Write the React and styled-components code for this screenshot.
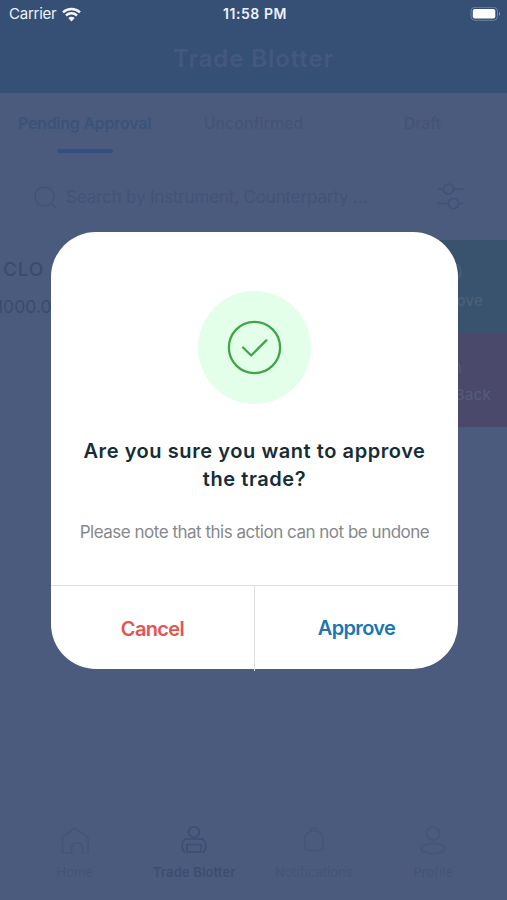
import React from 'react';
import styled, { createGlobalStyle } from 'styled-components';

const GlobalStyle = createGlobalStyle`
    * {
        box-sizing: border-box;
    }
    body {
        margin: 0;
        background: #4b5b7d;
        font-family: Inter, "Liberation Sans", sans-serif;
    }
    button {
        font-family: inherit;
    }
`

const Screen = styled.div`
    position: relative;
    display: flex;
    flex-direction: column;
    width: 507px;
    height: 900px;
    overflow: hidden;
    background: #4b5b7d;
`

const Header = styled.header`
    height: 93px;
    background: #364f75;
`

const StatusBar = styled.div`
    display: grid;
    grid-template-columns: 1fr auto 1fr;
    align-items: center;
    height: 28px;
    padding: 0 6px 0 9px;
    color: #edf2fa;
    font-size: 15px;
    line-height: 28px;
`

const Carrier = styled.div`
    display: flex;
    align-items: center;
    gap: 6px;
    letter-spacing: -0.25px;
`

const Clock = styled.div`
    font-size: 14px;
    font-weight: 600;
    letter-spacing: 0.55px;
`

const Battery = styled.svg`
    justify-self: end;
`

const Title = styled.h1`
    margin: 0;
    height: 60px;
    color: #44587e;
    font-size: 24px;
    font-weight: 600;
    line-height: 61px;
    letter-spacing: 0.9px;
    text-align: center;
`

const Tabs = styled.nav`
    display: grid;
    grid-template-columns: repeat(3, 1fr);
    height: 77px;
    padding-top: 18px;
`

const Tab = styled.div`
    display: flex;
    flex-direction: column;
    align-items: center;
    gap: 14px;
    color: ${props => props.$active ? '#3a5379' : '#435477'};
    font-size: 16px;
    font-weight: ${props => props.$active ? 600 : 500};
    line-height: 24px;
    letter-spacing: ${props => props.$active ? '-0.25px' : '-0.05px'};

    &::after {
        content: '';
        width: 56px;
        height: 4px;
        border-radius: 2px;
        background: ${props => props.$active ? '#36507c' : 'transparent'};
    }
`

const SearchBar = styled.div`
    display: flex;
    align-items: center;
    height: 54px;
    padding: 0 41px 0 33px;
    color: #42537a;
`

const SearchText = styled.span`
    flex: 1;
    margin-left: 8px;
    font-size: 17px;
    letter-spacing: -0.17px;
`

const TradeRow = styled.div`
    display: flex;
    justify-content: space-between;
    height: 187px;
    margin-top: 16px;
`

const TradeInfo = styled.div`
    padding-top: 17px;
    color: #384c71;
`

const TradeName = styled.div`
    padding-left: 3px;
    font-size: 19px;
    font-weight: 500;
    line-height: 26px;
    letter-spacing: 0.8px;
`

const TradeAmount = styled.div`
    margin: 12px 0 0 -4px;
    font-size: 17.5px;
    line-height: 24px;
`

const Actions = styled.div`
    display: flex;
    flex-direction: column;
    width: 110px;
`

const Action = styled.div`
    display: flex;
    flex: 1;
    flex-direction: column;
    align-items: center;
    gap: 9px;
    padding-top: 22px;
    color: ${props => props.$color};
    background: ${props => props.$background};
    font-size: 15px;
    font-weight: 500;
    line-height: 20px;
    letter-spacing: 0.2px;
`

const TabBar = styled.footer`
    display: grid;
    grid-template-columns: repeat(4, 119.5px);
    margin: auto 0 0 15px;
    height: 75px;
`

const TabBarItem = styled.div`
    display: flex;
    flex-direction: column;
    align-items: center;
    gap: 5px;
    color: ${props => props.$active ? '#3a4e74' : '#44557a'};
    font-size: 13px;
    font-weight: ${props => props.$active ? 600 : 400};
    line-height: 20px;
    letter-spacing: ${props => props.$active ? '0.15px' : '0'};

    svg {
        fill: none;
        stroke: currentColor;
        stroke-width: 1.6;
        stroke-linejoin: round;
    }
`

const ModalLayer = styled.div`
    position: absolute;
    inset: 0;
    display: flex;
    justify-content: center;
    align-items: center;
    padding-left: 2px;
`

const Dialog = styled.section`
    display: flex;
    flex-direction: column;
    align-items: center;
    width: 407px;
    height: 437px;
    padding-top: 59px;
    border-radius: 45px;
    background: #fff;
`

const Badge = styled.div`
    display: flex;
    justify-content: center;
    align-items: center;
    width: 113px;
    height: 113px;
    border-radius: 50%;
    background: #e3ffea;
`

const Question = styled.h2`
    margin: 33px 0 0;
    color: #162d38;
    font-size: 20px;
    font-weight: 600;
    line-height: 28px;
    letter-spacing: 0.57px;
    text-align: center;
`

const Note = styled.p`
    margin: 26px 0 0;
    color: #84898b;
    font-size: 17px;
    line-height: 26px;
    letter-spacing: -0.49px;
    white-space: nowrap;
`

const Buttons = styled.div`
    display: grid;
    grid-template-columns: 203px 204px;
    width: 100%;
    height: 84px;
    margin-top: auto;
    border-top: 1px solid #dedfe0;
`

const Button = styled.button`
    padding: 2px 0 0;
    border: 0;
    background: none;
    color: ${props => props.$color};
    font-size: 20px;
    font-weight: 600;
    letter-spacing: -0.65px;

    & + & {
        height: 85px;
        padding: 0 0 0;
        border-left: 1px solid #dedfe0;
    }
`

const WifiIcon = () => (
    <svg width="19" height="15" viewBox="0 0 19 15">
        <path d="M1 5.3C5.9.8 13.1.8 18 5.3M4 8.5c3.2-2.9 7.8-2.9 11 0" fill="none" stroke="#f3f7fc" strokeWidth="2.5" />
        <path d="M6.3 11c1.9-1.6 4.5-1.6 6.4 0l-3.2 3.5z" fill="#f3f7fc" />
    </svg>
)

const BatteryIcon = () => (
    <Battery width="31" height="15" viewBox="0 0 31 15">
        <rect x="1" y=".3" width="26.5" height="13" rx="4" fill="none" stroke="#6f82a2" strokeWidth="1" />
        <rect x="2.8" y="2" width="22.5" height="9.5" rx="2" fill="#fff" />
        <path d="M29 4.7q2 2.1 0 4.2z" fill="#8d9cb6" />
    </Battery>
)

const SearchIcon = () => (
    <svg width="25" height="25" viewBox="0 0 25 25" fill="none" stroke="currentColor" strokeWidth="1.4">
        <circle cx="11.5" cy="11.5" r="9.5" />
        <path d="M18.5 18.5l4.5 4.5" />
    </svg>
)

const FilterIcon = () => (
    <svg width="30" height="28" viewBox="0 0 30 28" fill="none" stroke="#40527a" strokeWidth="1.7">
        <path d="M2 6h5M18 6h10M1 20.5h11M23 20.5h4" />
        <circle cx="12.5" cy="6" r="5" />
        <circle cx="17.5" cy="20.5" r="5" />
    </svg>
)

const CheckIcon = () => (
    <svg width="55" height="55" viewBox="0 0 55 55" fill="none" stroke="#41a548" strokeWidth="2.3" strokeLinecap="round" strokeLinejoin="round">
        <circle cx="27.5" cy="27.5" r="25.6" />
        <path d="M16 27.5l8.2 8L39.3 20.4" />
    </svg>
)

const navItems = [
    {
        label: 'Home',
        icon: <path d="M5 28H2.5V12L14.5 3 28 12v16h-5.500v-4q0-4-3-6h-5q-3 2-3 6v4z" />
    },
    {
        label: 'Trade Blotter',
        active: true,
        icon: <>
            <circle cx="15" cy="7" r="5.3" />
            <path d="M6 28q-6-7 0-14h18q6 7 0 14M8 19.500h14V27H8z" />
        </>
    },
    {
        label: 'Notifications',
        icon: <path d="M6 24V14q0-8 9-8t9 8v10q-9 4-18 0zM12 6q0-3 3-3t3 3" />
    },
    {
        label: 'Profile',
        icon: <>
            <circle cx="15" cy="8.500" r="6.500" />
            <ellipse cx="15" cy="23.500" rx="12" ry="5" />
        </>
    }
]

export default function App () {
    return (
        <Screen>
            <GlobalStyle />
            <Header>
                <StatusBar>
                    <Carrier>Carrier <WifiIcon /></Carrier>
                    <Clock>11:58 PM</Clock>
                    <BatteryIcon />
                </StatusBar>
                <Title>Trade Blotter</Title>
            </Header>
            <Tabs>
                <Tab $active>Pending Approval</Tab>
                <Tab>Unconfirmed</Tab>
                <Tab>Draft</Tab>
            </Tabs>
            <SearchBar>
                <SearchIcon />
                <SearchText>Search by Instrument, Counterparty ...</SearchText>
                <FilterIcon />
            </SearchBar>
            <TradeRow>
                <TradeInfo>
                    <TradeName>CLO</TradeName>
                    <TradeAmount>1000.0</TradeAmount>
                </TradeInfo>
                <Actions>
                    <Action $background="#39536e" $color="#4a6079">
                        <svg width="20" height="20" viewBox="0 0 20 20" fill="none" stroke="currentColor" strokeWidth="1.5">
                            <circle cx="10" cy="10" r="9" />
                            <path d="M6 10l3 3 5-6" />
                        </svg>
                        Approve
                    </Action>
                    <Action $background="#4a496b" $color="#56597a">
                        <svg width="18" height="20" viewBox="0 0 18 20" fill="none" stroke="currentColor" strokeWidth="1.5">
                            <path d="M6 3L2 7l4 4M2 7h10q5 0 5 5v5" />
                        </svg>
                        Send Back
                    </Action>
                </Actions>
            </TradeRow>
            <TabBar>
                {navItems.map(item => (
                    <TabBarItem key={item.label} $active={item.active}>
                        <svg width="30" height="32" viewBox="0 0 30 32">{item.icon}</svg>
                        {item.label}
                    </TabBarItem>
                ))}
            </TabBar>
            <ModalLayer>
                <Dialog role="dialog">
                    <Badge><CheckIcon /></Badge>
                    <Question>Are you sure you want to approve<br />the trade?</Question>
                    <Note>Please note that this action can not be undone</Note>
                    <Buttons>
                        <Button $color="#e65353">Cancel</Button>
                        <Button $color="#2075b1">Approve</Button>
                    </Buttons>
                </Dialog>
            </ModalLayer>
        </Screen>
    )
}
